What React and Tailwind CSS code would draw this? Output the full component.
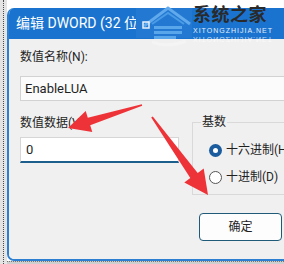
export default function App() {
  return (
    <div className="relative w-[284px] h-[264px] overflow-hidden flex bg-white font-['Roboto','Noto_Sans_CJK_SC',sans-serif] text-[#1f1f1f]">
      {/* desktop strip on the left */}
      <div className="w-[7px] shrink-0 bg-[#e4e4e4] flex justify-center">
        <div className="h-full border-l border-dotted border-[#4a4a4a]" />
      </div>

      <div className="flex-1 min-w-0 flex flex-col">
        <div className="h-[8px] bg-white" />

        {/* dialog window */}
        <div className="flex-1 flex flex-col border-l-2 border-b-2 border-[#2d7fd2] rounded-l-[7px] overflow-hidden">
          <div className="h-[31px] shrink-0 bg-[#1a74cf] flex items-center pl-[7px] text-white text-[14px] whitespace-nowrap">
            编辑 DWORD (32 位)
          </div>

          <div className="flex-1 bg-[#f0f0f0] pl-[11px] pt-[10px]">
            <div className="text-[12px] leading-4">数值名称(N):</div>
            <div className="mt-[11px] h-[25px] border border-r-0 border-[#d2d2d2] bg-[#fbfbfb] flex items-center pl-[4px] text-[13px]">
              EnableLUA
            </div>

            <div className="mt-[14px] flex gap-[13px]">
              <div className="w-[159px] shrink-0">
                <div className="text-[12px] leading-4">数值数据(V):</div>
                <div className="mt-[6px] h-[26px] border border-[#d6d6d6] border-b-2 border-b-[#1d5f8c] bg-white flex items-center pl-[5px] text-[13px]">
                  0
                </div>
              </div>

              <div className="w-[120px] shrink-0 mt-[7px] h-[73px] border border-[#d9d9d9]">
                <div className="-mt-[9px] ml-[8px] w-fit px-[1px] bg-[#f0f0f0] text-[12px] leading-4">基数</div>
                <div className="mt-[11px] ml-[16px] h-[18px] flex items-center gap-[4px] text-[12px] whitespace-nowrap">
                  <span className="w-[13px] h-[13px] shrink-0 rounded-full bg-[#1b5c9e] flex items-center justify-center">
                    <span className="w-[5px] h-[5px] rounded-full bg-white" />
                  </span>
                  十六进制(H)
                </div>
                <div className="mt-[9px] ml-[16px] h-[18px] flex items-center gap-[4px] text-[12px] whitespace-nowrap">
                  <span className="w-[13px] h-[13px] shrink-0 rounded-full border border-[#555] bg-white" />
                  十进制(D)
                </div>
              </div>
            </div>

            <button className="mt-[18px] ml-[179px] w-[83px] h-[28px] rounded-[4px] border border-[#1f5a78] bg-[#fdfdfd] text-[12px] flex items-center justify-center">
              确定
            </button>
          </div>
        </div>

        <div className="h-[3px] bg-[#cfcfcf] border-t border-dotted border-[#777]" />
      </div>

      {/* watermark logo */}
      <div className="absolute left-[134px] top-0 w-[150px] h-[48px] pointer-events-none">
        <svg className="absolute left-0 top-[4px]" width="58" height="44" viewBox="0 0 58 44">
          <rect x="2" y="4" width="56" height="30" fill="#2379d2" />
          <path d="M10 22 L34 4 L56 20" fill="none" stroke="#5fa9ec" strokeWidth="3" />
          <path d="M18 20 L34 9 L50 20" fill="none" stroke="#4a9be6" strokeWidth="2" />
          <rect x="20" y="22" width="28" height="3" fill="#5aa6ea" />
          <rect x="20" y="27" width="28" height="3" fill="#5aa6ea" />
          <rect x="20" y="32" width="22" height="3" fill="#5aa6ea" />
          <rect x="9" y="18" width="6" height="6" fill="none" stroke="#e8f2fc" strokeWidth="1.5" />
          <path d="M18 38 Q34 44 52 37" fill="none" stroke="#f4f4f4" strokeWidth="3" />
        </svg>
        <div className="absolute left-[59px] top-[1px] text-[18px] leading-6 font-bold tracking-[0.5px] text-[#2a2a2a] font-['Noto_Sans_CJK_SC',sans-serif]">
          系统之家
        </div>
        <div className="absolute left-[59px] top-[26px] text-[7px] leading-[9px] tracking-[1px] text-[#e3eefa] font-['Liberation_Sans',sans-serif]">
          XITONGZHIJIA.NET
        </div>
        <div className="absolute left-[59px] top-[35px] text-[7px] leading-[9px] tracking-[1px] text-[#ffffff] opacity-70 scale-y-[-1] font-['Liberation_Sans',sans-serif]">
          XITONGZHIJIA.NET
        </div>
      </div>

      {/* red annotation arrows */}
      <svg className="absolute left-0 top-0 pointer-events-none" width="284" height="264" viewBox="0 0 284 264">
        <polygon
          points="141.8,104.2 87.8,117.7 85.7,111 68,128 92.3,132 90.2,125.3 142.2,105.8"
          fill="#ee3338"
        />
        <polygon
          points="151.2,117.6 190.3,178.1 184.3,182.5 208,195 203.7,168.5 197.7,172.9 152.8,116.4"
          fill="#ee3338"
        />
      </svg>
    </div>
  );
}
